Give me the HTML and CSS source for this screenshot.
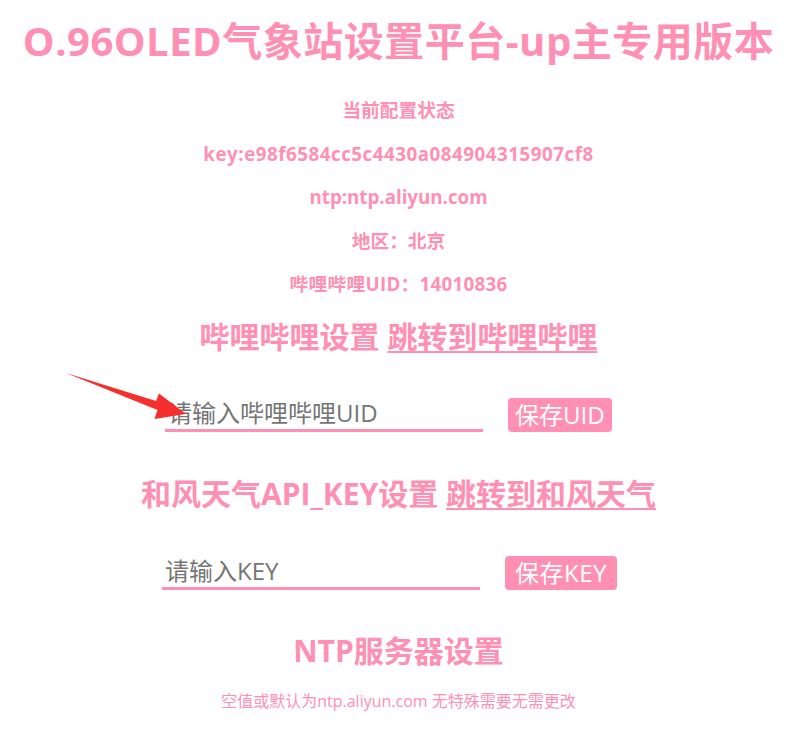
FILE: index.html
```html
<!DOCTYPE html>
<html lang="zh-CN">
<head>
<meta charset="utf-8">
<title>O.96OLED气象站设置平台</title>
<link rel="stylesheet" href="styles.css">
</head>
<body>
<main class="page">
  <h1 class="title">O.96OLED气象站设置平台-up主专用版本</h1>
  <section class="status">
    <h3 class="status-line status-head">当前配置状态</h3>
    <h3 class="status-line status-key">key:e98f6584cc5c4430a084904315907cf8</h3>
    <h3 class="status-line">ntp:ntp.aliyun.com</h3>
    <h3 class="status-line">地区：北京</h3>
    <h3 class="status-line status-uid">哔哩哔哩UID：14010836</h3>
  </section>
  <h2 class="section-title first">哔哩哔哩设置 <a class="jump" href="#">跳转到哔哩哔哩</a></h2>
  <form class="field-row row-uid">
    <input class="field" type="text" placeholder="请输入哔哩哔哩UID">
    <button class="save save-uid" type="button">保存UID</button>
  </form>
  <h2 class="section-title">和风天气API_KEY设置 <a class="jump" href="#">跳转到和风天气</a></h2>
  <form class="field-row row-key">
    <input class="field" type="text" placeholder="请输入KEY">
    <button class="save save-key" type="button">保存KEY</button>
  </form>
  <h2 class="section-title">NTP服务器设置</h2>
  <p class="hint">空值或默认为ntp.aliyun.com 无特殊需要无需更改</p>
</main>
<svg class="annot" width="805" height="744" viewBox="0 0 805 744" aria-hidden="true">
  <polygon points="66,373 156,401 159,393.5 186,414 154.5,419 157.5,410" fill="#f5302c"/>
</svg>
</body>
</html>
```
FILE: styles.css
```css
html, body {
  margin: 0;
  padding: 0;
  background: #ffffff;
}

body {
  font-family: "Open Sans", "Noto Sans CJK SC", sans-serif;
  color: #ff8fb3;
  position: relative;
  width: 805px;
  min-height: 744px;
  overflow: hidden;
}

.page {
  display: flex;
  flex-direction: column;
  align-items: center;
  text-align: center;
  padding-right: 8px;
}

.title {
  margin: 15px 0 0;
  font-size: 40px;
  line-height: 52px;
  font-weight: 700;
  white-space: nowrap;
  letter-spacing: 0.5px;
}

.status {
  display: flex;
  flex-direction: column;
  align-items: center;
  gap: 18.5px;
  margin-top: 30px;
}

.status-line {
  margin: 0;
  font-size: 18.72px;
  line-height: 25px;
  font-weight: 700;
}

.status-key {
  letter-spacing: 0.55px;
}

.status-uid {
  letter-spacing: 0.3px;
}

.section-title {
  margin: 21px 0 0;
  font-size: 30px;
  line-height: 40px;
  font-weight: 700;
  white-space: nowrap;
}

.jump {
  color: inherit;
  text-decoration: underline;
  text-decoration-thickness: 2px;
  text-underline-offset: 3px;
}

.field-row {
  align-self: flex-start;
  display: flex;
  align-items: flex-end;
  gap: 25px;
  height: 34px;
}

.row-uid {
  margin: 41px 0 0 165px;
}

.row-key {
  margin: 42px 0 0 162px;
}

.field {
  width: 318px;
  height: 35px;
  box-sizing: border-box;
  border: none;
  border-bottom: 3px solid #ff8fb3;
  outline: none;
  padding: 0 3px 2px;
  font-family: "Open Sans", "Noto Sans CJK SC", sans-serif;
  font-size: 24px;
  line-height: 29px;
  color: #555555;
  background: transparent;
}

.field::placeholder {
  color: #757575;
}

.save {
  height: 34px;
  padding: 0 6px;
  border: none;
  border-radius: 4px;
  background: #ff8fb3;
  color: #ffffff;
  font-family: "Open Sans", "Noto Sans CJK SC", sans-serif;
  font-size: 24px;
  line-height: 34px;
  cursor: pointer;
}

.save-uid {
  padding: 0 7px;
}

.save-key {
  padding: 0 10px;
  letter-spacing: 0.5px;
}

.row-uid + .section-title {
  margin-top: 42px;
}

.row-key + .section-title {
  margin-top: 41px;
}

.hint {
  margin: 19px 0 0;
  font-size: 16px;
  line-height: 22px;
}

.annot {
  position: absolute;
  left: 0;
  top: 0;
  pointer-events: none;
}
```
